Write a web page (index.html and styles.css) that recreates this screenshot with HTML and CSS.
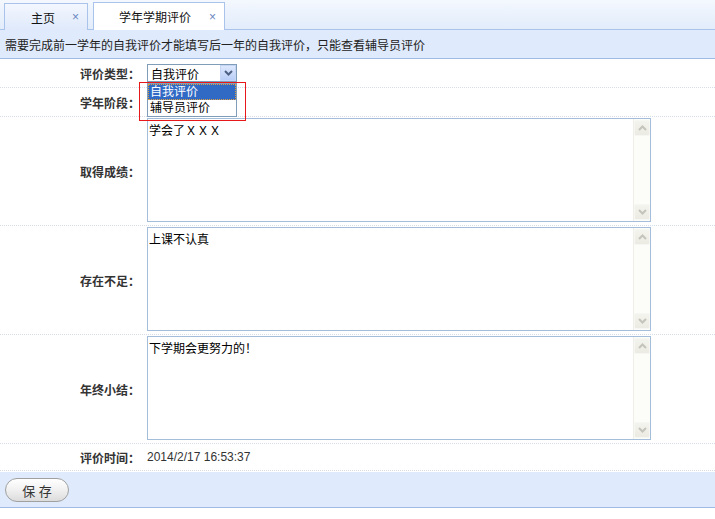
FILE: index.html
```html
<!DOCTYPE html>
<html lang="zh">
<head>
<meta charset="utf-8">
<title>学年学期评价</title>
<link rel="stylesheet" href="styles.css">
</head>
<body>
<div class="tabbar">
  <div class="tab">
    <span class="tab-title">主页</span><span class="tab-close">×</span>
  </div>
  <div class="tab active">
    <span class="tab-title">学年学期评价</span><span class="tab-close">×</span>
  </div>
</div>
<div class="notice">需要完成前一学年的自我评价才能填写后一年的自我评价，只能查看辅导员评价</div>
<div class="form">
  <div class="row row-short">
    <div class="label">评价类型：</div>
    <div class="value">
      <div class="select">
        <span class="select-text">自我评价</span>
        <span class="select-btn">
          <svg width="9" height="6" viewBox="0 0 9 6"><path d="M1 1 L4.5 4.5 L8 1" fill="none" stroke="#4d6185" stroke-width="2"/></svg>
        </span>
        <div class="popup">
          <div class="opt selected">自我评价</div>
          <div class="opt">辅导员评价</div>
        </div>
        <div class="popup-frame"></div>
      </div>
    </div>
  </div>
  <div class="row row-short">
    <div class="label">学年阶段：</div>
    <div class="value"></div>
  </div>
  <div class="row row-tall">
    <div class="label">取得成绩：</div>
    <div class="value">
      <div class="ta">
        <textarea class="ta-input">学会了ＸＸＸ</textarea>
        <div class="sb"><div class="sb-btn"><svg width="9" height="6" viewBox="0 0 9 6"><path d="M1 5 L4.5 1.5 L8 5" fill="none" stroke="#c4c4bc" stroke-width="2"/></svg></div><div class="sb-btn"><svg width="9" height="6" viewBox="0 0 9 6"><path d="M1 1 L4.5 4.5 L8 1" fill="none" stroke="#c4c4bc" stroke-width="2"/></svg></div></div>
      </div>
    </div>
  </div>
  <div class="row row-tall">
    <div class="label">存在不足：</div>
    <div class="value">
      <div class="ta">
        <textarea class="ta-input">上课不认真</textarea>
        <div class="sb"><div class="sb-btn"><svg width="9" height="6" viewBox="0 0 9 6"><path d="M1 5 L4.5 1.5 L8 5" fill="none" stroke="#c4c4bc" stroke-width="2"/></svg></div><div class="sb-btn"><svg width="9" height="6" viewBox="0 0 9 6"><path d="M1 1 L4.5 4.5 L8 1" fill="none" stroke="#c4c4bc" stroke-width="2"/></svg></div></div>
      </div>
    </div>
  </div>
  <div class="row row-tall">
    <div class="label">年终小结：</div>
    <div class="value">
      <div class="ta">
        <textarea class="ta-input">下学期会更努力的！</textarea>
        <div class="sb"><div class="sb-btn"><svg width="9" height="6" viewBox="0 0 9 6"><path d="M1 5 L4.5 1.5 L8 5" fill="none" stroke="#c4c4bc" stroke-width="2"/></svg></div><div class="sb-btn"><svg width="9" height="6" viewBox="0 0 9 6"><path d="M1 1 L4.5 4.5 L8 1" fill="none" stroke="#c4c4bc" stroke-width="2"/></svg></div></div>
      </div>
    </div>
  </div>
  <div class="row row-last">
    <div class="label">评价时间：</div>
    <div class="value date">2014/2/17 16:53:37</div>
  </div>
</div>
<div class="toolbar">
  <button class="btn">保 存</button>
</div>
</body>
</html>
```
FILE: styles.css
```css
* { box-sizing: border-box; }
body {
  margin: 0;
  background: #fff;
  font-family: "Liberation Sans", "Noto Sans CJK SC", sans-serif;
  font-size: 12px;
  color: #222;
}
.tabbar {
  height: 30px;
  background: linear-gradient(#f4f8fe, #e2ecfb);
  border-bottom: 1px solid #a9c3ea;
  display: flex;
  align-items: flex-end;
  padding-left: 4px;
  gap: 5px;
}
.tab {
  height: 27px;
  width: 84px;
  border: 1px solid #a9c3ea;
  border-bottom: none;
  background: linear-gradient(#f3f7fe, #dfe9fb);
  display: flex;
  align-items: center;
  padding: 0 8px 0 26px;
  justify-content: space-between;
  margin-bottom: -1px;
  font-size: 12px;
  color: #111;
}
.tab.active {
  width: 132px;
  background: #fff;
  padding-left: 25px;
  height: 28px;
}
.tab-close {
  color: #6a86c0;
  font-size: 12px;
}
.notice {
  height: 29px;
  background: #dfebfc;
  border-bottom: 1px solid #9fbbe3;
  padding-left: 5px;
  display: flex;
  align-items: center;
  color: #222;
}
.row {
  display: grid;
  grid-template-columns: 140px 1fr;
  column-gap: 7px;
  border-bottom: 1px dotted #d6dde8;
}
.row-short { height: 29px; }
.row-tall { height: 109px; }
.row-last { height: 27px; }
.label {
  text-align: right;
  font-weight: bold;
  color: #333;
  display: flex;
  align-items: center;
  justify-content: flex-end;
}
.value {
  display: flex;
  align-items: center;
}
.row-tall .value { align-items: flex-start; padding-top: 1px; }
.date { color: #333; }
.select {
  position: relative;
  width: 90px;
  height: 18px;
  border: 1px solid #7f9db9;
  background: #fff;
  display: flex;
  align-items: center;
  justify-content: space-between;
  padding-left: 3px;
  margin-top: 0;
}
.select-text { color: #000; }
.select-btn {
  width: 16px;
  height: 16px;
  background: linear-gradient(#dde8fd, #b9cdf7);
  border: 1px solid #c5d5f5;
  display: flex;
  align-items: center;
  justify-content: center;
}
.popup {
  position: absolute;
  left: -1px;
  top: 18px;
  width: 90px;
  height: 34px;
  border: 1px solid #7f9db9;
  background: #fff;
  z-index: 2;
}
.opt {
  height: 16px;
  line-height: 16px;
  padding-left: 2px;
  color: #000;
}
.opt.selected {
  background: #316ac5;
  color: #fff;
  outline: 1px dotted #e0a040;
  outline-offset: -1px;
}
.popup-frame {
  position: absolute;
  left: -9px;
  top: 17px;
  width: 107px;
  height: 39px;
  border: 1px solid #e8181a;
  z-index: 3;
  pointer-events: none;
}
.ta {
  width: 504px;
  height: 104px;
  border: 1px solid #a4bddb;
  display: flex;
  background: #fff;
}
.ta-input {
  flex: 1;
  border: none;
  outline: none;
  resize: none;
  overflow: hidden;
  padding: 2px 1px;
  font-family: "Liberation Sans", "Noto Sans CJK SC", sans-serif;
  font-size: 12px;
  color: #000;
  background: transparent;
}
.sb {
  width: 17px;
  background: #fcfcf8;
  border-left: 1px solid #efefe8;
  display: flex;
  flex-direction: column;
  justify-content: space-between;
  padding: 1px 0 1px 0;
}
.sb-btn {
  height: 16px;
  width: 16px;
  background: linear-gradient(#f4f4ee, #ebebe3);
  border: 1px solid #f6f6f2;
  border-radius: 2px;
  display: flex;
  align-items: center;
  justify-content: center;
}
.toolbar {
  margin-top: 1px;
  height: 36px;
  background: #dfebfc;
  border-bottom: 1px solid #9fbbe3;
  padding: 6px 0 0 5px;
}
.btn {
  width: 64px;
  height: 24px;
  border: 1px solid #a0a0a0;
  border-radius: 12px;
  background: linear-gradient(#ffffff, #f2f2f2 45%, #dcdcdc);
  font-family: "Liberation Sans", "Noto Sans CJK SC", sans-serif;
  font-size: 13px;
  color: #333;
  padding: 0;
  display: block;
}
```
